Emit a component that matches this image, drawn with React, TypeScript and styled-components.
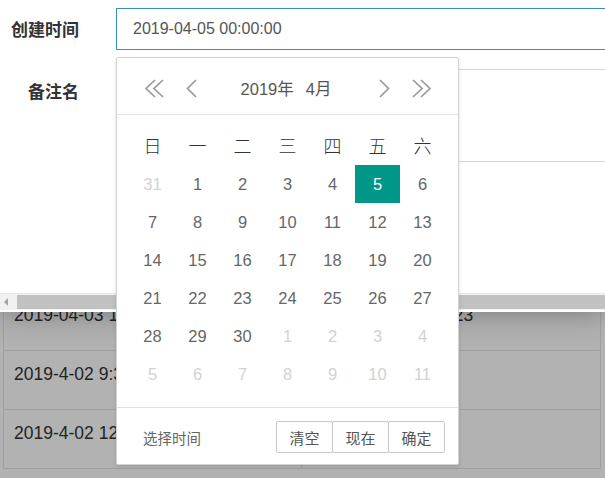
import React from "react";
import styled, { createGlobalStyle } from "styled-components";

const GlobalStyle = createGlobalStyle`
  html, body { margin: 0; padding: 0; }
  body {
    width: 605px;
    height: 478px;
    overflow: hidden;
    background: #ffffff;
    font-family: "Liberation Sans", Arial, "Noto Sans CJK SC", sans-serif;
  }
  * { box-sizing: border-box; }
`;

const Page = styled.div`
  position: relative;
  width: 605px;
  height: 478px;
  overflow: hidden;
`;

/* ---------- underlying page (table) ---------- */
const BackPage = styled.div`
  padding: 292px 5px 0 3px;
  background: #ffffff;
  height: 100%;
`;

const Table = styled.div`
  display: grid;
  grid-template-columns: 298px 299px;
  border-left: 1px solid #e6e6e6;
`;

const Cell = styled.div`
  height: 59px;
  padding: 13px 10px 0;
  font-size: 17.5px;
  line-height: 20px;
  color: #333;
  white-space: nowrap;
  overflow: hidden;
  border-right: 1px solid #e6e6e6;
  border-bottom: 1px solid #e6e6e6;
`;

const Mask = styled.div`
  position: absolute;
  inset: 0;
  background: rgba(0, 0, 0, 0.3);
`;

/* ---------- dialog layer ---------- */
const Layer = styled.div`
  position: absolute;
  left: 0;
  top: 0;
  width: 605px;
  height: 312px;
  background: #ffffff;
  box-shadow: 0 0 28px rgba(0, 0, 0, 0.35);
  display: flex;
  flex-direction: column;
  overflow: hidden;
`;

const Form = styled.div`
  flex: 1;
  padding-top: 8px;
  display: flex;
  flex-direction: column;
  gap: 19px;
  overflow: hidden;
`;

const FormRow = styled.div`
  display: flex;
  align-items: flex-start;
  gap: 36px;
`;

const Label = styled.div<{ $top: number }>`
  width: 80px;
  flex: none;
  padding-top: ${(p) => p.$top}px;
  padding-right: 1px;
  text-align: right;
  font-family: "Noto Sans CJK SC", sans-serif;
  font-weight: 700;
  font-size: 17px;
  line-height: 24px;
  color: #333;
`;

const Input = styled.div`
  flex: none;
  width: 560px;
  height: 42px;
  border: 1px solid #3a8dc1;
  padding-left: 16px;
  display: flex;
  align-items: center;
  font-size: 16px;
  color: #555;
`;

const TextArea = styled.div`
  flex: none;
  width: 560px;
  height: 93px;
  border: 1px solid #d4d4da;
`;

const ScrollBar = styled.div`
  flex: none;
  height: 19px;
  background: #f1f1f1;
  border-top: 1px solid #e8e8e8;
  border-bottom: 2px solid #ffffff;
  display: flex;
  align-items: stretch;
`;

const ScrollArrow = styled.div`
  width: 17px;
  display: flex;
  align-items: center;
  justify-content: center;
  &::before {
    content: "";
    border-top: 4px solid transparent;
    border-bottom: 4px solid transparent;
    border-right: 4px solid #a3a3a3;
    margin-left: -6px;
  }
`;

const ScrollThumb = styled.div`
  flex: 1;
  margin: 1px 0;
  background: #c1c1c1;
`;

/* ---------- date picker ---------- */
const Picker = styled.div`
  position: absolute;
  left: 116px;
  top: 57px;
  width: 343px;
  height: 408px;
  background: #fff;
  border: 1px solid #d2d2d2;
  border-radius: 2px;
  box-shadow: 0 2px 4px rgba(0, 0, 0, 0.12);
  display: flex;
  flex-direction: column;
  font-family: "Liberation Sans", Arial, "Noto Sans CJK SC", sans-serif;
`;

const PickerHeader = styled.div`
  height: 57px;
  flex: none;
  border-bottom: 1px solid #e2e2e2;
  display: flex;
  align-items: center;
  padding: 4px 26px 0 27px;
`;

const NavGroup = styled.div<{ $end?: boolean }>`
  display: flex;
  align-items: center;
  justify-content: ${(p) => (p.$end ? "flex-end" : "flex-start")};
  gap: 21px;
  width: 56px;
`;

const NavIcon = styled.svg`
  display: block;
  flex: none;
  color: #999;
`;

const Title = styled.div`
  flex: 1;
  display: flex;
  justify-content: center;
  gap: 12px;
  font-size: 16.5px;
  color: #555;
  padding-right: 4px;
`;

const Grid = styled.div`
  display: grid;
  grid-template-columns: repeat(7, 45px);
  grid-auto-rows: 38px;
  padding: 12px 14px 14px 13px;
  border-bottom: 1px solid #e2e2e2;
`;

const WeekDay = styled.div`
  display: flex;
  align-items: center;
  justify-content: center;
  padding-bottom: 2px;
  font-family: "Noto Sans CJK SC", sans-serif;
  font-weight: 300;
  font-size: 18px;
  color: #333;
`;

const Day = styled.div<{ $muted?: boolean; $active?: boolean }>`
  display: flex;
  align-items: center;
  justify-content: center;
  font-size: 16.5px;
  color: ${(p) => (p.$active ? "#fff" : p.$muted ? "#d2d2d2" : "#666")};
  background: ${(p) => (p.$active ? "#009688" : "transparent")};
`;

const Footer = styled.div`
  flex: 1;
  display: flex;
  align-items: center;
  justify-content: space-between;
  padding: 0 13px 0 26px;
`;

const FooterText = styled.div`
  font-family: "Noto Sans CJK SC", sans-serif;
  font-size: 14.5px;
  color: #666;
  padding-top: 2px;
`;

const BtnGroup = styled.div`
  display: flex;
  margin-top: 2px;
`;

const Btn = styled.div`
  width: 57px;
  height: 32px;
  display: flex;
  align-items: center;
  justify-content: center;
  border: 1px solid #c9c9c9;
  border-radius: 2px;
  margin-left: -1px;
  font-family: "Noto Sans CJK SC", sans-serif;
  font-size: 15px;
  color: #555;
  background: #fff;
`;

const DoubleLeft = () => (
  <NavIcon width="21" height="19" viewBox="0 0 21 19">
    <path d="M11 1 L2 9.5 L11 18 M19 1 L10 9.5 L19 18" fill="none" stroke="currentColor" strokeWidth="1.7" />
  </NavIcon>
);
const SingleLeft = () => (
  <NavIcon width="11" height="19" viewBox="0 0 11 19">
    <path d="M10 1 L1.5 9.5 L10 18" fill="none" stroke="currentColor" strokeWidth="1.7" />
  </NavIcon>
);
const SingleRight = () => (
  <NavIcon width="11" height="19" viewBox="0 0 11 19">
    <path d="M1 1 L9.5 9.5 L1 18" fill="none" stroke="currentColor" strokeWidth="1.7" />
  </NavIcon>
);
const DoubleRight = () => (
  <NavIcon width="21" height="19" viewBox="0 0 21 19">
    <path d="M2 1 L11 9.5 L2 18 M10 1 L19 9.5 L10 18" fill="none" stroke="currentColor" strokeWidth="1.7" />
  </NavIcon>
);

const weekDays = ["日", "一", "二", "三", "四", "五", "六"];

type DayCell = { n: number; muted: boolean; active: boolean };
const days: DayCell[] = [
  { n: 31, muted: true, active: false },
  ...Array.from({ length: 30 }, (_, i) => ({ n: i + 1, muted: false, active: i + 1 === 5 })),
  ...Array.from({ length: 11 }, (_, i) => ({ n: i + 1, muted: true, active: false })),
];

const rows = [
  ["2019-04-03 10:20:23", "2019-04-03 11:22:23"],
  ["2019-4-02 9:30:00", ""],
  ["2019-4-02 12:00:00", ""],
];

export default function App() {
  return (
    <Page>
      <GlobalStyle />
      <BackPage>
        <Table>
          {rows.map((r, i) => (
            <React.Fragment key={i}>
              <Cell>{r[0]}</Cell>
              <Cell>{r[1]}</Cell>
            </React.Fragment>
          ))}
        </Table>
      </BackPage>
      <Mask />
      <Layer>
        <Form>
          <FormRow>
            <Label $top={9}>创建时间</Label>
            <Input>2019-04-05 00:00:00</Input>
          </FormRow>
          <FormRow>
            <Label $top={10}>备注名</Label>
            <TextArea />
          </FormRow>
        </Form>
        <ScrollBar>
          <ScrollArrow />
          <ScrollThumb />
        </ScrollBar>
      </Layer>
      <Picker>
        <PickerHeader>
          <NavGroup>
            <DoubleLeft />
            <SingleLeft />
          </NavGroup>
          <Title>
            <span>2019年</span>
            <span>4月</span>
          </Title>
          <NavGroup $end>
            <SingleRight />
            <DoubleRight />
          </NavGroup>
        </PickerHeader>
        <Grid>
          {weekDays.map((w) => (
            <WeekDay key={w}>{w}</WeekDay>
          ))}
          {days.map((d, i) => (
            <Day key={i} $muted={d.muted} $active={d.active}>
              {d.n}
            </Day>
          ))}
        </Grid>
        <Footer>
          <FooterText>选择时间</FooterText>
          <BtnGroup>
            <Btn>清空</Btn>
            <Btn>现在</Btn>
            <Btn>确定</Btn>
          </BtnGroup>
        </Footer>
      </Picker>
    </Page>
  );
}
